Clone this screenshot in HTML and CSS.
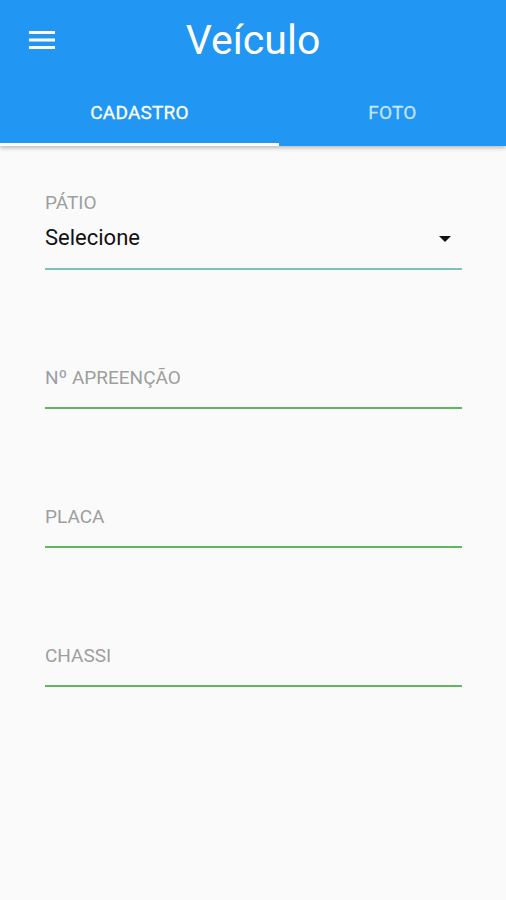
FILE: index.html
```html
<!DOCTYPE html>
<html lang="pt">
<head>
<meta charset="utf-8">
<title>Veículo</title>
<link rel="stylesheet" href="styles.css">
</head>
<body>
<header class="appbar">
  <div class="toolbar">
    <button class="menu" aria-label="menu">
      <svg width="26" height="19" viewBox="0 0 26 19"><rect x="0" y="0" width="26" height="3" fill="#fff"/><rect x="0" y="7.5" width="26" height="3" fill="#fff"/><rect x="0" y="15" width="26" height="3" fill="#fff"/></svg>
    </button>
    <h1 class="title">Veículo</h1>
  </div>
  <nav class="tabs">
    <div class="tab tab-first active">CADASTRO</div>
    <div class="tab">FOTO</div>
  </nav>
</header>
<main class="form">
  <div class="field select">
    <label class="label">PÁTIO</label>
    <div class="select-row">
      <span class="value">Selecione</span>
      <svg class="arrow" width="12" height="6" viewBox="0 0 12 6"><path d="M0 0h12L6 6z" fill="#111"/></svg>
    </div>
  </div>
  <div class="field input">
    <label class="label">Nº APREENÇÃO</label>
  </div>
  <div class="field input">
    <label class="label">PLACA</label>
  </div>
  <div class="field input">
    <label class="label">CHASSI</label>
  </div>
</main>
</body>
</html>
```
FILE: styles.css
```css
* { box-sizing: border-box; }
html, body { margin: 0; padding: 0; }
body {
  width: 506px;
  height: 900px;
  background: #fafafa;
  font-family: Roboto, "Noto Sans", Arial, sans-serif;
  overflow: hidden;
}
.appbar {
  background: #2196f3;
  height: 146px;
  box-shadow: 0 2px 4px rgba(0,0,0,0.25);
  display: flex;
  flex-direction: column;
  position: relative;
}
.toolbar {
  height: 80px;
  display: flex;
  align-items: center;
  position: relative;
}
.menu {
  background: none;
  border: 0;
  padding: 0;
  margin-left: 29px;
  margin-top: 1px;
  width: 26px;
  height: 19px;
  display: block;
}
.menu svg { display: block; }
.title {
  margin: 0;
  color: #fff;
  font-weight: 400;
  font-size: 41px;
  position: absolute;
  left: 0;
  right: 0;
  top: 16px;
  line-height: 48px;
  text-align: center;
  pointer-events: none;
}
.tabs {
  flex: 1;
  display: flex;
}
.tab {
  flex: 1;
  display: flex;
  align-items: center;
  justify-content: center;
  color: rgba(255,255,255,0.7);
  font-size: 19px;
  font-weight: 400;
  letter-spacing: 0.2px;
  padding-top: 2px;
  border-bottom: 3px solid transparent;
  -webkit-text-stroke: 0.3px currentColor;
}
.tab-first { flex: 0 0 279px; }
.tab.active {
  color: #fff;
  border-bottom-color: #fff;
}
.form {
  padding: 0 44px 0 45px;
}
.field { display: flex; flex-direction: column; }
.label {
  color: #9e9e9e;
  font-size: 19px;
  line-height: 22px;
}
.select {
  padding-top: 46px;
  height: 124px;
}
.select-row {
  display: flex;
  align-items: center;
  justify-content: space-between;
  margin-top: 6px;
  height: 50px;
  padding-bottom: 13px;
  border-bottom: 2px solid #80c2b5;
}
.value {
  color: #111;
  font-size: 22px;
  line-height: 26px;
}
.arrow { margin-right: 11px; margin-top: 2px; }
.input {
  justify-content: flex-end;
  padding-bottom: 18px;
  border-bottom: 2px solid #5fb760;
  height: 139px;
}
```
